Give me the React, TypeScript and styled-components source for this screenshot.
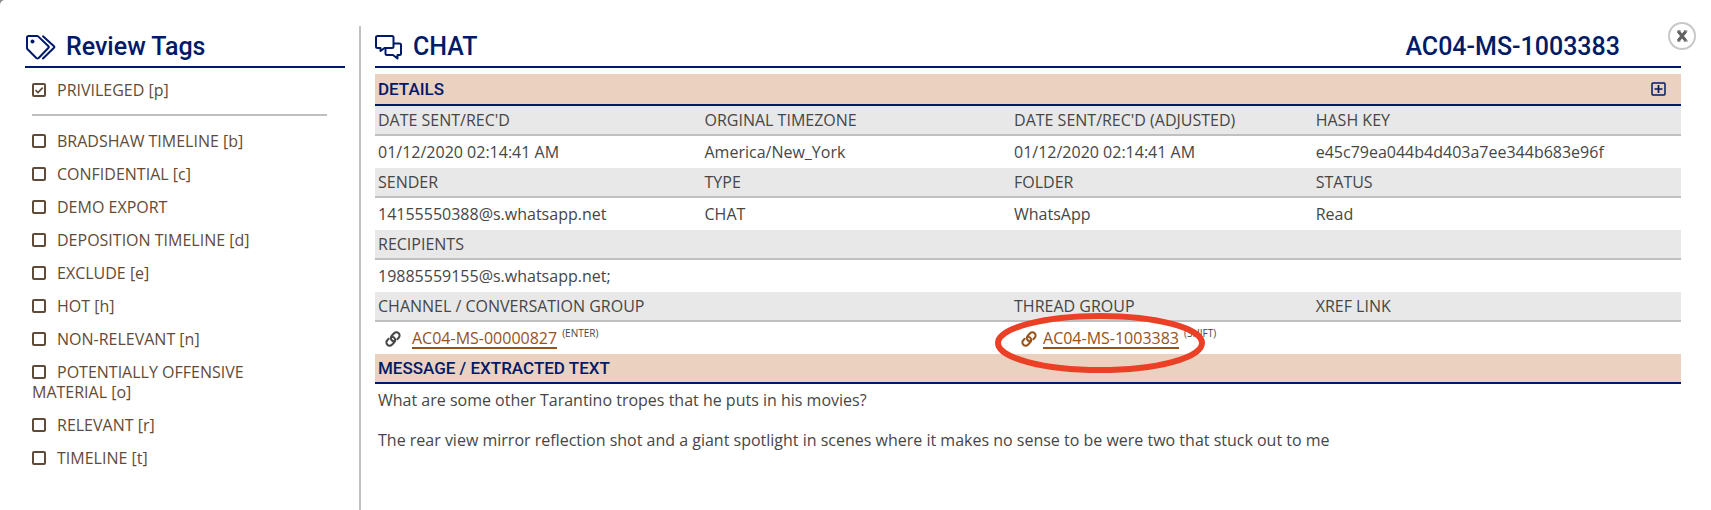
import React from "react";
import styled, { createGlobalStyle } from "styled-components";

const navy = "#001a68";
const brown = "#5f4b38";
const rust = "#96521d";

const GlobalStyle = createGlobalStyle`
  *, *::before, *::after { box-sizing: border-box; }
  body {
    margin: 0;
    background: #8b8b8b;
    color: #464646;
    font: 16px/20px "Open Sans", "Noto Sans", sans-serif;
  }
`;

const Dialog = styled.div`
  position: relative;
  display: flex;
  gap: 14px;
  min-height: 100vh;
  padding: 26px 30px 0 25px;
  background: #fff;
  border-top-left-radius: 5px;
`;

const Sidebar = styled.aside`
  flex: 0 0 320px;
`;

const Main = styled.main`
  flex: 1;
  min-width: 0;
  display: flex;
  flex-direction: column;
`;

const Divider = styled.div`
  width: 2px;
  background: #c0c0c0;
`;

const TitleBar = styled.header`
  display: flex;
  align-items: center;
  gap: 10px;
  height: 42px;
  padding-top: 2px;
  border-bottom: 2px solid ${navy};
  color: ${navy};
`;

const Title = styled.h1`
  margin: 0;
  font: 500 25px/38px Roboto, sans-serif;
`;

const RecordId = styled(Title).attrs({ as: "div" })`
  margin-left: auto;
  padding-right: 61px;
`;

const TagList = styled.ul`
  list-style: none;
  margin: 0;
  padding: 0 56px 0 7px;
`;

const TagItem = styled.li`
  margin-bottom: 13px;
`;

const PinnedTag = styled.div`
  margin: 12px 18px 15px 7px;
  padding-bottom: 14px;
  border-bottom: 2px solid #c0c0c0;
`;

const Tag = styled.label`
  color: ${brown};
`;

const Box = styled.input`
  appearance: none;
  width: 14px;
  height: 14px;
  margin: 0 11px 0 0;
  vertical-align: -1px;
  border: 2px solid ${brown};
  border-radius: 2px;
  &:checked {
    background: url("data:image/svg+xml,%3Csvg xmlns='http://www.w3.org/2000/svg' viewBox='0 0 10 10'%3E%3Cpath d='M1.5 5.2 4 7.6 8.7 2.6' fill='none' stroke='%235f4b38' stroke-width='1.7'/%3E%3C/svg%3E") center / 10px 10px;
  }
`;

const Band = styled.div<{ $height: number }>`
  display: flex;
  align-items: center;
  justify-content: space-between;
  height: ${(p) => p.$height}px;
  padding: 0 15px 0 3px;
  background: #ebd1c0;
  border-bottom: 2px solid ${navy};
  color: ${navy};
`;

const DetailsBand = styled(Band)`
  margin-top: 6px;
`;

const BandTitle = styled.h2`
  margin: 0;
  font: 500 17px/20px Roboto, sans-serif;
`;

const ExpandButton = styled.button`
  display: flex;
  padding: 0;
  border: 0;
  background: none;
  color: inherit;
`;

const Fields = styled.table`
  width: 100%;
  table-layout: fixed;
  border-collapse: separate;
  border-spacing: 0;
`;

const Column = styled.col<{ $share: number }>`
  width: ${(p) => p.$share}%;
`;

const Head = styled.th`
  height: 30px;
  padding: 0 3px;
  background: #e8e8e8;
  border-bottom: 2px solid #c0c0c0;
  font-weight: 400;
  text-align: left;
`;

const Cell = styled.td`
  height: 32px;
  padding: 0 3px;
`;

const LinkLine = styled.div<{ $active?: boolean }>`
  display: flex;
  align-items: center;
  padding: 2px 0 0 7px;
  color: ${(p) => (p.$active ? rust : "inherit")};
`;

const RecordLink = styled.a<{ $gap: number }>`
  margin: 0 5px 0 ${(p) => p.$gap}px;
  border-bottom: 2px solid ${rust};
  color: ${rust};
  line-height: 18px;
  text-decoration: none;
`;

const KeyHint = styled.small`
  align-self: flex-start;
  color: #464646;
  font-size: 10px;
  line-height: 8px;
`;

const Highlighted = styled.div`
  position: relative;
`;

const Ring = styled.svg`
  position: absolute;
  left: -20px;
  top: -15px;
  pointer-events: none;
`;

const Message = styled.p`
  margin: 0 3px 20px;
`;

const MessageBody = styled.section`
  padding-top: 6px;
`;

const CloseButton = styled.button`
  position: absolute;
  top: 22px;
  right: 14px;
  padding: 0;
  border: 0;
  background: none;
  line-height: 0;
`;

const TagsIcon = () => (
  <svg width="31" height="25" viewBox="0 0 31 25" fill="none" stroke="currentColor" strokeWidth="2" strokeLinejoin="round" strokeLinecap="round" aria-hidden="true">
    <path d="M3.500 1h8.500q.8 0 1.400.6L23.500 11.300q.7.700 0 1.400L13.700 23q-1.200 1-2.400 0L2.600 14.300Q2 13.700 2 12.900V2.500Q2 1 3.500 1z" />
    <path d="M18 1.300 29 11.300q.7.700 0 1.400L18 23.500" />
    <circle cx="7.500" cy="6.500" r="2" fill="currentColor" stroke="none" />
  </svg>
);

const ChatIcon = () => (
  <svg width="28" height="25" viewBox="0 0 28 25" fill="none" stroke="currentColor" strokeWidth="2" strokeLinejoin="round" aria-hidden="true">
    <path d="M2.500 1h14.500q1.500 0 1.500 1.500v9q0 1.500-1.500 1.500H9.500l-4 3v-3h-3Q1 13 1 11.500v-9Q1 1 2.500 1z" />
    <path d="M18.500 8.500h6q1.500 0 1.500 1.500v8.500q0 1.500-1.500 1.500h-2v3.500L18 20h-6q-1.500 0-1.500-1.500V13" />
  </svg>
);

const LinkIcon = () => (
  <svg width="16" height="16" viewBox="0 0 16 16" fill="none" stroke="currentColor" strokeWidth="2" strokeLinecap="round" aria-hidden="true">
    <path d="M9 10.200a3.200 3.200 0 0 1-2.300-5.400l2.400-2.500a3.200 3.200 0 0 1 4.600 4.500l-1.400 1.400" />
    <path d="M7 5.800a3.200 3.200 0 0 1 2.300 5.400l-2.400 2.500a3.200 3.200 0 0 1-4.600-4.500l1.400-1.400" />
  </svg>
);

const PlusIcon = () => (
  <svg width="15" height="14" viewBox="0 0 15 14" fill="none" stroke="currentColor" aria-hidden="true">
    <rect x="1" y="1" width="13" height="12" rx="1" strokeWidth="1.500" />
    <path d="M7.500 3v8M3.500 7h8" strokeWidth="1.700" />
  </svg>
);

const CloseIcon = () => (
  <svg width="30" height="30" viewBox="0 0 30 30" fill="none" aria-hidden="true">
    <circle cx="15" cy="14" r="13" fill="#fff" stroke="#c8c8c8" strokeWidth="2" />
    <path d="M11 9l8 10M19 9l-8 10" stroke="#606060" strokeWidth="3" />
    <path d="M10 9h4M17 9h3.500M10 19h3.500M17 19h4" stroke="#808080" strokeWidth="1" />
  </svg>
);

const tags = [
  "BRADSHAW TIMELINE [b]",
  "CONFIDENTIAL [c]",
  "DEMO EXPORT",
  "DEPOSITION TIMELINE [d]",
  "EXCLUDE [e]",
  "HOT [h]",
  "NON-RELEVANT [n]",
  "POTENTIALLY OFFENSIVE MATERIAL [o]",
  "RELEVANT [r]",
  "TIMELINE [t]",
];

const TagCheck = ({ name, checked }: { name: string; checked?: boolean }) => (
  <Tag>
    <Box type="checkbox" defaultChecked={checked} />
    {name}
  </Tag>
);

export default function App() {
  return (
    <>
      <GlobalStyle />
      <Dialog role="dialog" aria-label="Chat record">
        <Sidebar>
          <TitleBar>
            <TagsIcon />
            <Title>Review Tags</Title>
          </TitleBar>
          <PinnedTag>
            <TagCheck name="PRIVILEGED [p]" checked />
          </PinnedTag>
          <TagList>
            {tags.map((tag) => (
              <TagItem key={tag}>
                <TagCheck name={tag} />
              </TagItem>
            ))}
          </TagList>
        </Sidebar>
        <Divider />
        <Main>
          <TitleBar>
            <ChatIcon />
            <Title>CHAT</Title>
            <RecordId>AC04-MS-1003383</RecordId>
          </TitleBar>
          <DetailsBand $height={32}>
            <BandTitle>DETAILS</BandTitle>
            <ExpandButton aria-label="Expand details">
              <PlusIcon />
            </ExpandButton>
          </DetailsBand>
          <Fields>
            <colgroup>
              <Column $share={25} />
              <Column $share={23.7} />
              <Column $share={23.1} />
              <Column $share={28.2} />
            </colgroup>
            <tbody>
              <tr>
                <Head>DATE SENT/REC'D</Head>
                <Head>ORGINAL TIMEZONE</Head>
                <Head>DATE SENT/REC'D (ADJUSTED)</Head>
                <Head>HASH KEY</Head>
              </tr>
              <tr>
                <Cell>01/12/2020 02:14:41 AM</Cell>
                <Cell>America/New_York</Cell>
                <Cell>01/12/2020 02:14:41 AM</Cell>
                <Cell>e45c79ea044b4d403a7ee344b683e96f</Cell>
              </tr>
              <tr>
                <Head>SENDER</Head>
                <Head>TYPE</Head>
                <Head>FOLDER</Head>
                <Head>STATUS</Head>
              </tr>
              <tr>
                <Cell>14155550388@s.whatsapp.net</Cell>
                <Cell>CHAT</Cell>
                <Cell>WhatsApp</Cell>
                <Cell>Read</Cell>
              </tr>
              <tr>
                <Head colSpan={4}>RECIPIENTS</Head>
              </tr>
              <tr>
                <Cell colSpan={4}>19885559155@s.whatsapp.net;</Cell>
              </tr>
              <tr>
                <Head colSpan={2}>CHANNEL / CONVERSATION GROUP</Head>
                <Head>THREAD GROUP</Head>
                <Head>XREF LINK</Head>
              </tr>
              <tr>
                <Cell colSpan={2}>
                  <LinkLine>
                    <LinkIcon />
                    <RecordLink $gap={11} href="#channel">AC04-MS-00000827</RecordLink>
                    <KeyHint>(ENTER)</KeyHint>
                  </LinkLine>
                </Cell>
                <Cell>
                  <Highlighted>
                    <LinkLine $active>
                      <LinkIcon />
                      <RecordLink $gap={6} href="#thread">AC04-MS-1003383</RecordLink>
                      <KeyHint>(SHIFT)</KeyHint>
                    </LinkLine>
                    <Ring width="212" height="62" viewBox="0 0 212 62" aria-hidden="true">
                      <ellipse cx="106" cy="31" rx="102" ry="27" fill="none" stroke="#ec4026" strokeWidth="6" />
                    </Ring>
                  </Highlighted>
                </Cell>
                <Cell />
              </tr>
            </tbody>
          </Fields>
          <Band $height={30}>
            <BandTitle>MESSAGE / EXTRACTED TEXT</BandTitle>
          </Band>
          <MessageBody>
            <Message>What are some other Tarantino tropes that he puts in his movies?</Message>
            <Message>The rear view mirror reflection shot and a giant spotlight in scenes where it makes no sense to be were two that stuck out to me</Message>
          </MessageBody>
        </Main>
        <CloseButton aria-label="Close">
          <CloseIcon />
        </CloseButton>
      </Dialog>
    </>
  );
}
